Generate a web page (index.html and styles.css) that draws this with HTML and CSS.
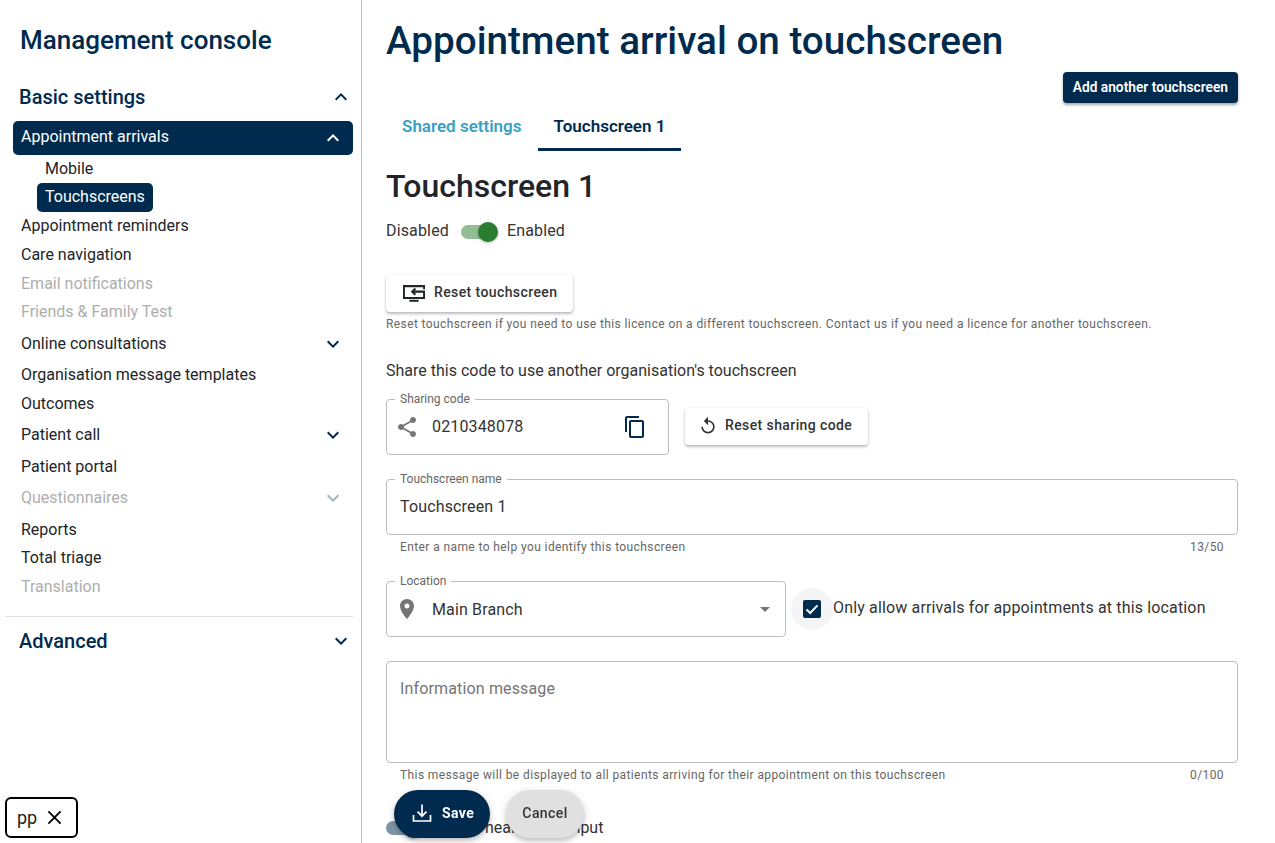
FILE: index.html
```html
<!DOCTYPE html>
<html lang="en">
<head>
    <meta charset="UTF-8">
    <meta name="viewport" content="width=device-width, initial-scale=1.0">
    <title>Appointment arrival on touchscreen</title>
    <link rel="stylesheet" href="styles.css">
</head>
<body>
    <svg class="sprite" aria-hidden="true">
        <symbol id="i-up" viewBox="0 0 24 24"><path d="M12 8l-6 6 1.41 1.41L12 10.83l4.59 4.58L18 14z"/></symbol>
        <symbol id="i-down" viewBox="0 0 24 24"><path d="M16.59 8.59 12 13.17 7.41 8.59 6 10l6 6 6-6z"/></symbol>
        <symbol id="i-share" viewBox="0 0 24 24"><path d="M18 16.08c-.76 0-1.44.3-1.96.77L8.91 12.7c.05-.23.09-.46.09-.7s-.04-.47-.09-.7l7.05-4.11c.54.5 1.25.81 2.04.81 1.66 0 3-1.34 3-3s-1.34-3-3-3-3 1.34-3 3c0 .24.04.47.09.7L8.04 9.81C7.5 9.31 6.79 9 6 9c-1.66 0-3 1.34-3 3s1.34 3 3 3c.79 0 1.5-.31 2.04-.81l7.12 4.16c-.05.21-.08.43-.08.65 0 1.61 1.31 2.92 2.92 2.92s2.92-1.31 2.92-2.92-1.31-2.92-2.92-2.92z"/></symbol>
        <symbol id="i-copy" viewBox="0 0 24 24"><path d="M16 1H4c-1.1 0-2 .9-2 2v14h2V3h12V1zm3 4H8c-1.1 0-2 .9-2 2v14c0 1.1.9 2 2 2h11c1.1 0 2-.9 2-2V7c0-1.1-.9-2-2-2zm0 16H8V7h11v14z"/></symbol>
        <symbol id="i-replay" viewBox="0 0 24 24"><path d="M12 5V1L7 6l5 5V7c3.31 0 6 2.69 6 6s-2.69 6-6 6-6-2.69-6-6H4c0 4.42 3.58 8 8 8s8-3.58 8-8-3.58-8-8-8z"/></symbol>
        <symbol id="i-pin" viewBox="0 0 24 24"><path d="M12 2C8.13 2 5 5.13 5 9c0 5.25 7 13 7 13s7-7.75 7-13c0-3.87-3.13-7-7-7zm0 9.5c-1.38 0-2.5-1.12-2.5-2.5s1.12-2.5 2.5-2.5 2.5 1.12 2.5 2.5-1.12 2.5-2.5 2.5z"/></symbol>
    </svg>

    <aside class="sidebar">
        <div class="console-title">Management console</div>

        <div class="section-head"><span>Basic settings</span><svg class="chev"><use href="#i-up"/></svg></div>
        <nav class="nav">
            <div class="nav-row nav-expand nav-active"><span>Appointment arrivals</span><svg class="chev"><use href="#i-up"/></svg></div>
            <div class="nav-sub">Mobile</div>
            <div class="nav-sub nav-sub-active">Touchscreens</div>
            <div class="nav-row">Appointment reminders</div>
            <div class="nav-row">Care navigation</div>
            <div class="nav-row nav-disabled">Email notifications</div>
            <div class="nav-row nav-disabled">Friends &amp; Family Test</div>
            <div class="nav-row nav-expand"><span>Online consultations</span><svg class="chev"><use href="#i-down"/></svg></div>
            <div class="nav-row">Organisation message templates</div>
            <div class="nav-row">Outcomes</div>
            <div class="nav-row nav-expand"><span>Patient call</span><svg class="chev"><use href="#i-down"/></svg></div>
            <div class="nav-row">Patient portal</div>
            <div class="nav-row nav-expand nav-disabled"><span>Questionnaires</span><svg class="chev"><use href="#i-down"/></svg></div>
            <div class="nav-row">Reports</div>
            <div class="nav-row">Total triage</div>
            <div class="nav-row nav-disabled">Translation</div>
        </nav>
        <div class="section-head section-advanced"><span>Advanced</span><svg class="chev"><use href="#i-down"/></svg></div>
    </aside>

    <main class="main">
        <h1>Appointment arrival on touchscreen</h1>
        <div class="add-row"><button class="btn-add">Add another touchscreen</button></div>

        <div class="tabs">
            <div class="tab">Shared settings</div>
            <div class="tab tab-active">Touchscreen 1</div>
        </div>

        <h2>Touchscreen 1</h2>

        <div class="toggle-row">
            <span>Disabled</span>
            <span class="toggle"></span>
            <span>Enabled</span>
        </div>

        <button class="btn-white btn-reset">
            <svg class="screen-icon" viewBox="0 0 24 19" fill="none" stroke="currentColor" stroke-width="2.2">
                <path d="M23 5.500V2H1v13h22V8H10"/>
                <path d="M7 18h10"/>
                <path d="M13.500 4.500 10 8l3.500 3.500"/>
            </svg>
            Reset touchscreen
        </button>
        <div class="helper helper-reset">Reset touchscreen if you need to use this licence on a different touchscreen. Contact us if you need a licence for another touchscreen.</div>

        <div class="share-text">Share this code to use another organisation's touchscreen</div>

        <div class="share-row">
            <div class="field field-share">
                <label>Sharing code</label>
                <svg class="field-icon"><use href="#i-share"/></svg>
                <span class="field-value field-value-up">0210348078</span>
                <svg class="copy-icon"><use href="#i-copy"/></svg>
            </div>
            <button class="btn-white btn-share">
                <svg class="replay-icon"><use href="#i-replay"/></svg>
                Reset sharing code
            </button>
        </div>

        <div class="field field-name">
            <label>Touchscreen name</label>
            <span class="field-value field-value-up">Touchscreen 1</span>
        </div>
        <div class="helper helper-row"><span>Enter a name to help you identify this touchscreen</span><span>13/50</span></div>

        <div class="location-row">
            <div class="field field-location">
                <label>Location</label>
                <svg class="field-icon"><use href="#i-pin"/></svg>
                <span class="field-value">Main Branch</span>
                <span class="caret"></span>
            </div>
            <span class="check-halo">
                <span class="check">
                    <svg viewBox="0 0 18 18" fill="none" stroke="#fff" stroke-width="2"><path d="M3.500 9.500 7.200 13l7.300-7.600"/></svg>
                </span>
            </span>
            <span class="check-label">Only allow arrivals for appointments at this location</span>
        </div>

        <div class="field field-message">
            <span class="placeholder">Information message</span>
        </div>
        <div class="helper helper-row"><span>This message will be displayed to all patients arriving for their appointment on this touchscreen</span><span>0/100</span></div>

        <div class="toggle-row toggle-input">
            <span class="toggle toggle-navy"></span>
            <span>Enable hearing aid input</span>
        </div>
    </main>

    <div class="actions">
        <button class="btn-save">
            <svg viewBox="0 0 20 20" fill="none" stroke="#fff" stroke-width="1.7"><path d="M10 1.500v11.500M5.500 8.700 10 13.200l4.500-4.500M1.500 12v6h17v-6"/></svg>
            Save
        </button>
        <button class="btn-cancel">Cancel</button>
    </div>

    <div class="chip">
        <span>pp</span>
        <svg viewBox="0 0 16 16" fill="none" stroke="#000" stroke-width="2"><path d="M1.500 1.500l13 13M14.500 1.500l-13 13"/></svg>
    </div>
</body>
</html>
```

FILE: styles.css
```css
* {
    box-sizing: border-box;
}
html, body {
    height: 100%;
}
body {
    display: flex;
    margin: 0;
    overflow: hidden;
    background-color: #fff;
    color: #212529;
    font-family: Roboto, "Liberation Sans", sans-serif;
    font-size: 16px;
}
button {
    font-family: inherit;
    cursor: pointer;
    border: none;
}
.sprite {
    display: none;
}

/* sidebar */
.sidebar {
    flex: 0 0 362px;
    height: 100%;
    padding: 0 8px 0 5px;
    border-right: 1px solid #bdbdbd;
    color: #002b4e;
}
.console-title {
    padding: 24px 0 0 15px;
    font-size: 26px;
    line-height: 32px;
    font-weight: 500;
}
.section-head {
    display: flex;
    align-items: center;
    justify-content: space-between;
    height: 34px;
    margin-top: 24px;
    padding: 0 0 0 14px;
    font-size: 20px;
    font-weight: 500;
}
.section-advanced {
    margin-top: 0;
    height: 50px;
    border-top: 1px solid #e0e0e0;
}
.chev {
    width: 24px;
    height: 24px;
    fill: #002b4e;
}
.nav {
    margin: 7px 0 0 8px;
    padding-bottom: 13px;
    color: #212529;
}
.nav-row {
    height: 28.8px;
    padding: 0 8px 2px;
    line-height: 26px;
}
.nav-expand {
    display: flex;
    align-items: center;
    justify-content: space-between;
    height: 34px;
    padding: 0 8px 3px;
}
.nav-active {
    background-color: #002b4e;
    border-radius: 5px;
    color: #fff;
}
.nav-active .chev {
    margin-top: 3px;
    fill: #fff;
}
.nav-sub {
    width: max-content;
    height: 28px;
    margin-left: 24px;
    padding: 0 8px;
    line-height: 27px;
}
.nav-sub-active {
    height: 29px;
    margin-bottom: 1px;
    background-color: #002b4e;
    border-radius: 5px;
    color: #fff;
}
.nav-disabled {
    color: #aeaeae;
}
.nav-disabled .chev {
    fill: #a6b4c1;
}

/* main column */
.main {
    flex: 1;
    height: 100%;
    padding: 0 37px 0 24px;
    overflow: hidden;
}
h1 {
    margin: 0;
    padding-top: 17px;
    color: #002b4e;
    font-size: 38.65px;
    line-height: 48px;
    font-weight: 500;
}
.add-row {
    display: flex;
    justify-content: flex-end;
    margin-top: 7px;
}
.btn-add {
    height: 31px;
    padding: 0 10px 2px;
    background-color: #002b4e;
    color: #fff;
    border-radius: 4px;
    font-size: 13.75px;
    font-weight: 600;
    box-shadow: 0 2px 3px rgba(0, 0, 0, 0.35);
}
.tabs {
    display: flex;
    margin-top: 3px;
}
.tab {
    height: 45px;
    padding: 0 16px;
    color: #3a9fc6;
    font-size: 17px;
    font-weight: 600;
    line-height: 41px;
}
.tab-active {
    color: #002b4e;
    border-bottom: 3px solid #002b4e;
}
h2 {
    margin: 16px 0 0;
    font-size: 32px;
    line-height: 38px;
    font-weight: 500;
}
.toggle-row {
    display: flex;
    align-items: center;
    height: 24px;
    margin-top: 13px;
    color: #333;
    letter-spacing: 0.15px;
}
.toggle {
    position: relative;
    width: 34px;
    height: 14px;
    margin: 4px 12px 0;
    background-color: #93bd95;
    border-radius: 7px;
}
.toggle::after {
    content: "";
    position: absolute;
    top: -3px;
    right: -3px;
    width: 20px;
    height: 20px;
    background-color: #2a7d2e;
    border-radius: 50%;
    box-shadow: 0 1px 3px rgba(0, 0, 0, 0.3);
}
.toggle-navy {
    margin: 2px 0 0;
    background-color: #7f95a7;
}
.toggle-navy::after {
    background-color: #002b4e;
}
.btn-white {
    display: flex;
    align-items: center;
    height: 37px;
    background-color: #fff;
    color: #333;
    border-radius: 4px;
    font-size: 14px;
    font-weight: 500;
    letter-spacing: 0.4px;
    box-shadow: 0 2px 3px rgba(0, 0, 0, 0.25), 0 0 2px rgba(0, 0, 0, 0.1);
}
.btn-reset {
    width: 187px;
    margin-top: 33px;
    padding: 0 0 3px 17px;
}
.screen-icon {
    width: 22px;
    height: 18px;
    margin: 2px 9px 0 0;
    color: #212529;
}
.helper {
    color: #666;
    font-size: 12px;
    line-height: 14px;
    letter-spacing: 0.4px;
}
.helper-reset {
    margin-top: 5px;
}
.share-text {
    margin-top: 29px;
    color: #333;
    line-height: 22px;
}
.share-row {
    display: flex;
    align-items: center;
    margin-top: 17px;
}
.field {
    position: relative;
    display: flex;
    align-items: center;
    height: 56px;
    border: 1px solid #bdbdbd;
    border-radius: 4px;
    color: #333;
}
.field label {
    position: absolute;
    top: -8px;
    left: 8px;
    padding: 0 5px;
    background-color: #fff;
    color: #666;
    font-size: 12px;
    line-height: 14px;
}
.field-value {
    letter-spacing: 0.15px;
}
.field-value-up {
    padding-bottom: 2px;
}
.field-share {
    width: 283px;
}
.field-icon {
    flex: none;
    width: 24px;
    height: 24px;
    margin: 0 13px 0 8px;
    fill: #757575;
}
.copy-icon {
    width: 24px;
    height: 24px;
    margin-left: auto;
    margin-right: 21px;
    fill: #002b4e;
}
.btn-share {
    width: 183px;
    margin: 0 0 2px 16px;
    padding: 0 0 3px 13px;
}
.replay-icon {
    width: 20px;
    height: 20px;
    margin: 3px 7px 0 0;
    fill: #333;
}
.field-name {
    margin-top: 24px;
    padding-left: 13px;
}
.helper-row {
    display: flex;
    justify-content: space-between;
    margin-top: 5px;
    padding: 0 14px;
}
.location-row {
    position: relative;
    display: flex;
    align-items: center;
    margin-top: 27px;
}
.field-location {
    flex: none;
    width: 400px;
}
.caret {
    position: absolute;
    top: 25px;
    right: 15px;
    border-left: 5px solid transparent;
    border-right: 5px solid transparent;
    border-top: 5px solid #757575;
}
.check-halo {
    display: flex;
    align-items: center;
    justify-content: center;
    width: 42px;
    height: 42px;
    margin: 0 0 0 5px;
    background-color: #f3f5f7;
    border-radius: 50%;
}
.check {
    display: block;
    width: 18px;
    height: 18px;
    background-color: #002b4e;
    border-radius: 2px;
}
.check svg {
    display: block;
}
.check-label {
    margin-bottom: 3px;
    color: #333;
    letter-spacing: 0.15px;
}
.field-message {
    align-items: flex-start;
    height: 102px;
    margin-top: 24px;
    padding: 17px 13px;
}
.placeholder {
    color: #757575;
    line-height: 19px;
    letter-spacing: 0.15px;
}
.toggle-input {
    margin-top: 33px;
    gap: 13px;
    letter-spacing: 0;
}

/* overlays */
.actions {
    position: fixed;
    left: 394px;
    bottom: 5px;
    display: flex;
    gap: 16px;
}
.btn-save, .btn-cancel {
    height: 48px;
    padding-bottom: 3px;
    border-radius: 24px;
    font-size: 14px;
    font-weight: 700;
    letter-spacing: 0.4px;
    box-shadow: 0 3px 5px rgba(0, 0, 0, 0.2), 0 1px 10px rgba(0, 0, 0, 0.1);
}
.btn-save {
    display: flex;
    align-items: center;
    width: 96px;
    padding-left: 18px;
    background-color: #002b4e;
    color: #fff;
}
.btn-save svg {
    width: 20px;
    height: 20px;
    margin-right: 10px;
}
.btn-cancel {
    width: 78px;
    background-color: #e0e0e0;
    color: #333;
    font-weight: 500;
}
.chip {
    position: fixed;
    left: 5px;
    bottom: 5px;
    display: flex;
    align-items: center;
    width: 73px;
    height: 41px;
    padding-left: 10px;
    border: 2px solid #000;
    border-radius: 6px;
    background-color: #fff;
    font-size: 18px;
    color: #222;
}
.chip svg {
    width: 15px;
    height: 15px;
    margin-left: 10px;
}
```
